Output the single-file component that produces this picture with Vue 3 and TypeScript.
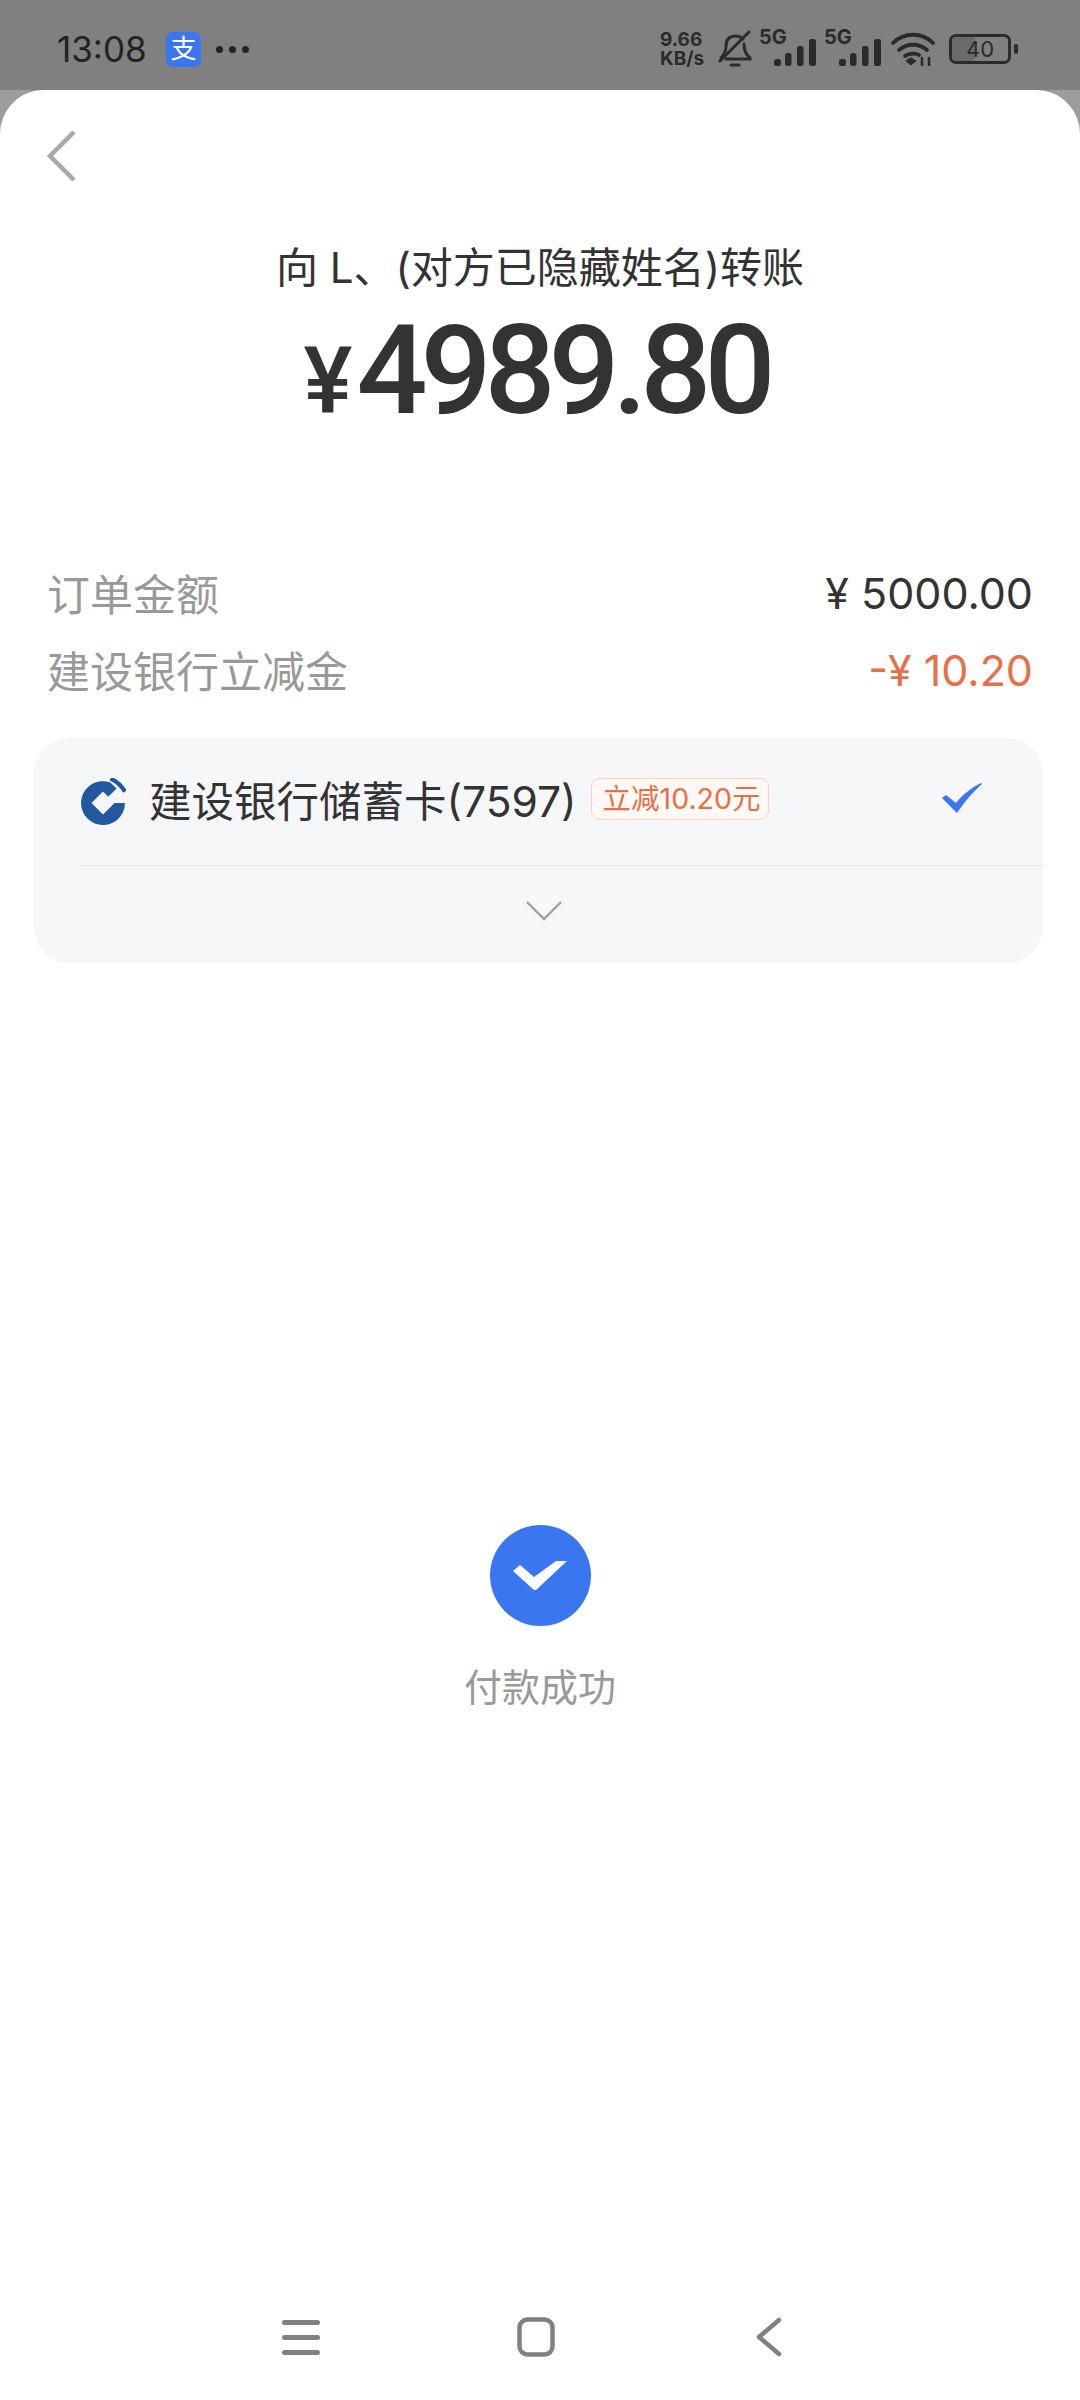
<script setup lang="ts">
const totals = [
  { label: '订单金额', value: '¥ 5000.00', discount: false },
  { label: '建设银行立减金', value: '-¥ 10.20', discount: true }
]
</script>

<template>
  <div class="page">
    <div class="status">
      <div class="status-left">
        <span class="time">13:08</span>
        <span class="app-badge">支</span>
        <span class="dots"><i></i><i></i><i></i></span>
      </div>
      <div class="status-right">
        <span class="speed">9.66<br />KB/s</span>
        <svg class="bell" width="34" height="38" viewBox="0 0 34 38" fill="none" stroke="#2b2b2b" stroke-width="3" stroke-linecap="round">
          <path d="M3 28c3-3 5-6 5-12 0-7 4-10 10-10 3 0 5 1 7 3" />
          <path d="M26 14c0 6 1 10 6 14v1H8" />
          <path d="M2 31L31 2" />
          <path d="M13 35h8" />
        </svg>
        <span class="signal">
          <span class="five-g">5G</span>
          <svg width="42" height="28" viewBox="0 0 42 28" fill="#2b2b2b">
            <rect x="0" y="20" width="7" height="7" rx="2.5" />
            <rect x="11" y="14" width="6.500" height="13" rx="2.500" />
            <rect x="23" y="7" width="6.500" height="20" rx="2.500" />
            <rect x="35" y="0" width="7" height="27" rx="2.500" />
          </svg>
        </span>
        <span class="signal">
          <span class="five-g">5G</span>
          <svg width="42" height="28" viewBox="0 0 42 28" fill="#2b2b2b">
            <rect x="0" y="20" width="7" height="7" rx="2.5" />
            <rect x="11" y="14" width="6.500" height="13" rx="2.500" />
            <rect x="23" y="7" width="6.500" height="20" rx="2.500" />
            <rect x="35" y="0" width="7" height="27" rx="2.500" />
          </svg>
        </span>
        <svg class="wifi" width="44" height="34" viewBox="0 0 44 34" fill="none" stroke="#2b2b2b" stroke-width="3.8" stroke-linecap="round">
          <path d="M2 11C13 0 31 0 42 11" />
          <path d="M8 18c8-7 20-7 28 0" />
          <path d="M14 24c5-3 11-3 14-1" />
          <path d="M15 29l5 4 5-4-5-3z" fill="#2b2b2b" stroke-width="1" />
          <path d="M31 26v7M38 26v7" stroke-width="2.6" />
        </svg>
        <span class="battery">
          <span class="battery-fill"></span>
          <span class="battery-num">40</span>
        </span>
        <span class="battery-cap"></span>
      </div>
    </div>

    <div class="backdrop">
      <div class="sheet">
        <div class="top">
          <svg class="back" width="32" height="52" viewBox="0 0 32 52" fill="none" stroke="#a9a9a9" stroke-width="4.5">
            <path d="M28 2L4 26l24 24" />
          </svg>
        </div>

        <div class="title">向 L、(对方已隐藏姓名)转账</div>
        <div class="amount"><span class="yen">¥</span><span class="digits">4989.80</span></div>

        <div class="totals">
          <div v-for="row in totals" :key="row.label" class="total-row">
            <span class="total-label">{{ row.label }}</span>
            <span :class="['total-value', { discount: row.discount }]">{{ row.value }}</span>
          </div>
        </div>

        <div class="card">
          <div class="bank-row">
            <svg class="bank-logo" width="46" height="47" viewBox="0 0 44 45" preserveAspectRatio="none">
              <path fill="#22589f" d="M29 4.200A21 21 0 1 0 43 24H33L22 35 11 24 22 13l5 5 8-8z" />
              <path fill="none" stroke="#22589f" stroke-width="4" d="M29 0.500C35 3 40 8 43 13" />
            </svg>
            <span class="bank-name">建设银行储蓄卡(7597)</span>
            <span class="tag">立减10.20元</span>
            <svg class="tick" width="40" height="30" viewBox="0 0 40 30">
              <path fill="#3b76f1" d="M0 15l4-3 10 8C20 12 29 5 39 0l1 1C31 9 23 18 15 30z" />
            </svg>
          </div>
          <div class="expand">
            <svg width="36" height="22" viewBox="0 0 36 22" fill="none" stroke="#a0a0a0" stroke-width="2.4">
              <path d="M1 2l17 17L35 2" />
            </svg>
          </div>
        </div>

        <div class="result">
          <span class="result-icon">
            <svg width="54" height="32" viewBox="0 0 54 32" fill="#fff">
              <path d="M0 11l7-6 14 12L43 1h11L23 30h-2z" />
            </svg>
          </span>
          <span class="result-text">付款成功</span>
        </div>

        <div class="nav">
          <svg class="nav-menu" width="38" height="36" viewBox="0 0 38 36" fill="#808080">
            <rect x="0" y="1" width="38" height="5" rx="2.5" />
            <rect x="0" y="16" width="38" height="5" rx="2.5" />
            <rect x="0" y="31" width="38" height="5" rx="2.5" />
          </svg>
          <svg class="nav-home" width="38" height="40" viewBox="0 0 38 40" fill="none" stroke="#808080" stroke-width="4.5">
            <rect x="2.5" y="2.5" width="33" height="35" rx="8" />
          </svg>
          <svg class="nav-back" width="26" height="40" viewBox="0 0 26 40" fill="none" stroke="#808080" stroke-width="4.5" stroke-linecap="round" stroke-linejoin="round">
            <path d="M23 3L3 20l20 17" />
          </svg>
        </div>
      </div>
    </div>
  </div>
</template>

<style>
html,
body {
  margin: 0;
  background: #fff;
}
</style>

<style scoped>
.page {
  width: 1080px;
  height: 2400px;
  display: flex;
  flex-direction: column;
  overflow: hidden;
  font-family: Inter, "Noto Sans CJK SC", sans-serif;
}

.status {
  height: 90px;
  flex: none;
  background: #808080;
  display: flex;
  justify-content: space-between;
  align-items: center;
  padding: 8px 62px 0 57px;
  color: #222;
  box-sizing: border-box;
}

.status-left,
.status-right {
  display: flex;
  align-items: center;
}

.time {
  font-size: 35px;
  width: 109px;
}

.app-badge {
  width: 35px;
  height: 35px;
  border-radius: 7px;
  background: #3b76f1;
  color: #fff;
  font-size: 26px;
  line-height: 34px;
  text-align: center;
}

.dots {
  display: flex;
  gap: 6px;
  margin-left: 15px;
}

.dots i {
  width: 7px;
  height: 7px;
  border-radius: 50%;
  background: #222;
}

.speed {
  font-size: 19px;
  font-weight: 700;
  line-height: 19px;
  color: #2b2b2b;
  width: 55px;
}

.bell {
  margin-left: 3px;
  margin-right: -3px;
}

.signal {
  position: relative;
  height: 36px;
  width: 62px;
  margin-left: 3px;
}

.signal svg {
  position: absolute;
  right: -2px;
  bottom: 0;
}

.five-g {
  position: absolute;
  left: 7px;
  top: -5px;
  font-size: 20px;
  line-height: 22px;
  font-weight: 700;
  color: #2b2b2b;
}

.wifi {
  margin-left: 12px;
}

.battery {
  position: relative;
  width: 56px;
  height: 24px;
  margin-left: 14px;
  border: 3px solid #2b2b2b;
  border-radius: 7px;
  display: flex;
  align-items: center;
  justify-content: center;
  overflow: hidden;
}

.battery-fill {
  position: absolute;
  left: 0;
  top: 0;
  bottom: 0;
  width: 23px;
  background: #6b6b6b;
}

.battery-num {
  position: relative;
  font-size: 22px;
  color: #2b2b2b;
}

.battery-cap {
  width: 4px;
  height: 10px;
  margin-left: 3px;
  border-radius: 2px;
  background: #2b2b2b;
}

.backdrop {
  flex: 1;
  display: flex;
  background: #9d9d9d;
}

.sheet {
  flex: 1;
  display: flex;
  flex-direction: column;
  background: #fff;
  border-radius: 44px 44px 0 0;
}

.top {
  height: 113px;
  padding: 40px 0 0 46px;
  box-sizing: border-box;
}

.back {
  display: block;
}

.title {
  margin-top: 35px;
  text-align: center;
  font-size: 42px;
  line-height: 60px;
  color: #333;
}

.amount {
  margin-top: 8px;
  padding-right: 8px;
  display: flex;
  justify-content: center;
  align-items: baseline;
  height: 130px;
  line-height: 130px;
  font-family: Roboto, sans-serif;
  font-weight: 500;
  color: #333;
}

.digits {
  font-size: 125px;
  letter-spacing: -7px;
}

.yen {
  font-size: 92px;
  margin-right: 4px;
}

.totals {
  margin-top: 126px;
  padding: 0 47px;
  display: flex;
  flex-direction: column;
  gap: 17px;
}

.total-row {
  display: flex;
  justify-content: space-between;
  align-items: center;
  height: 60px;
}

.total-label {
  font-size: 43px;
  color: #999;
}

.total-value {
  font-size: 43px;
  padding-top: 2px;
  color: #333;
}

.discount {
  color: #e5704a;
}

.card {
  margin: 39px 37px 0 34px;
  height: 225px;
  background: #f6f7f9;
  border-radius: 36px;
  padding-left: 46px;
}

.bank-row {
  height: 128px;
  display: flex;
  align-items: center;
  border-bottom: 1.5px solid #e6e7ea;
  box-sizing: border-box;
}

.bank-name {
  margin-left: 23px;
  margin-top: -6px;
  font-size: 42.5px;
  color: #333;
}

.tag {
  margin-left: 14px;
  margin-top: -6px;
  padding: 0 8px 0 11px;
  height: 40px;
  line-height: 39px;
  font-size: 28.5px;
  color: #e5704a;
  background: #fff8f5;
  border: 1.5px solid #f2d2c6;
  border-radius: 9px;
}

.tick {
  margin-left: auto;
  margin-right: 61px;
  margin-top: -8px;
}

.expand {
  display: flex;
  justify-content: center;
  padding-top: 34px;
  padding-right: 36px;
}

.result {
  margin-top: 562px;
  display: flex;
  flex-direction: column;
  align-items: center;
}

.result-icon {
  width: 101px;
  height: 101px;
  border-radius: 50%;
  background: #3b76f1;
  display: flex;
  align-items: center;
  justify-content: center;
}

.result-text {
  margin-top: 31px;
  font-size: 38px;
  color: #999;
}

.nav {
  margin-top: auto;
  height: 120px;
  display: flex;
  align-items: center;
  padding: 0 0 6px 282px;
  box-sizing: border-box;
}

.nav-home {
  margin-left: 197px;
}

.nav-back {
  margin-left: 201px;
}
</style>
